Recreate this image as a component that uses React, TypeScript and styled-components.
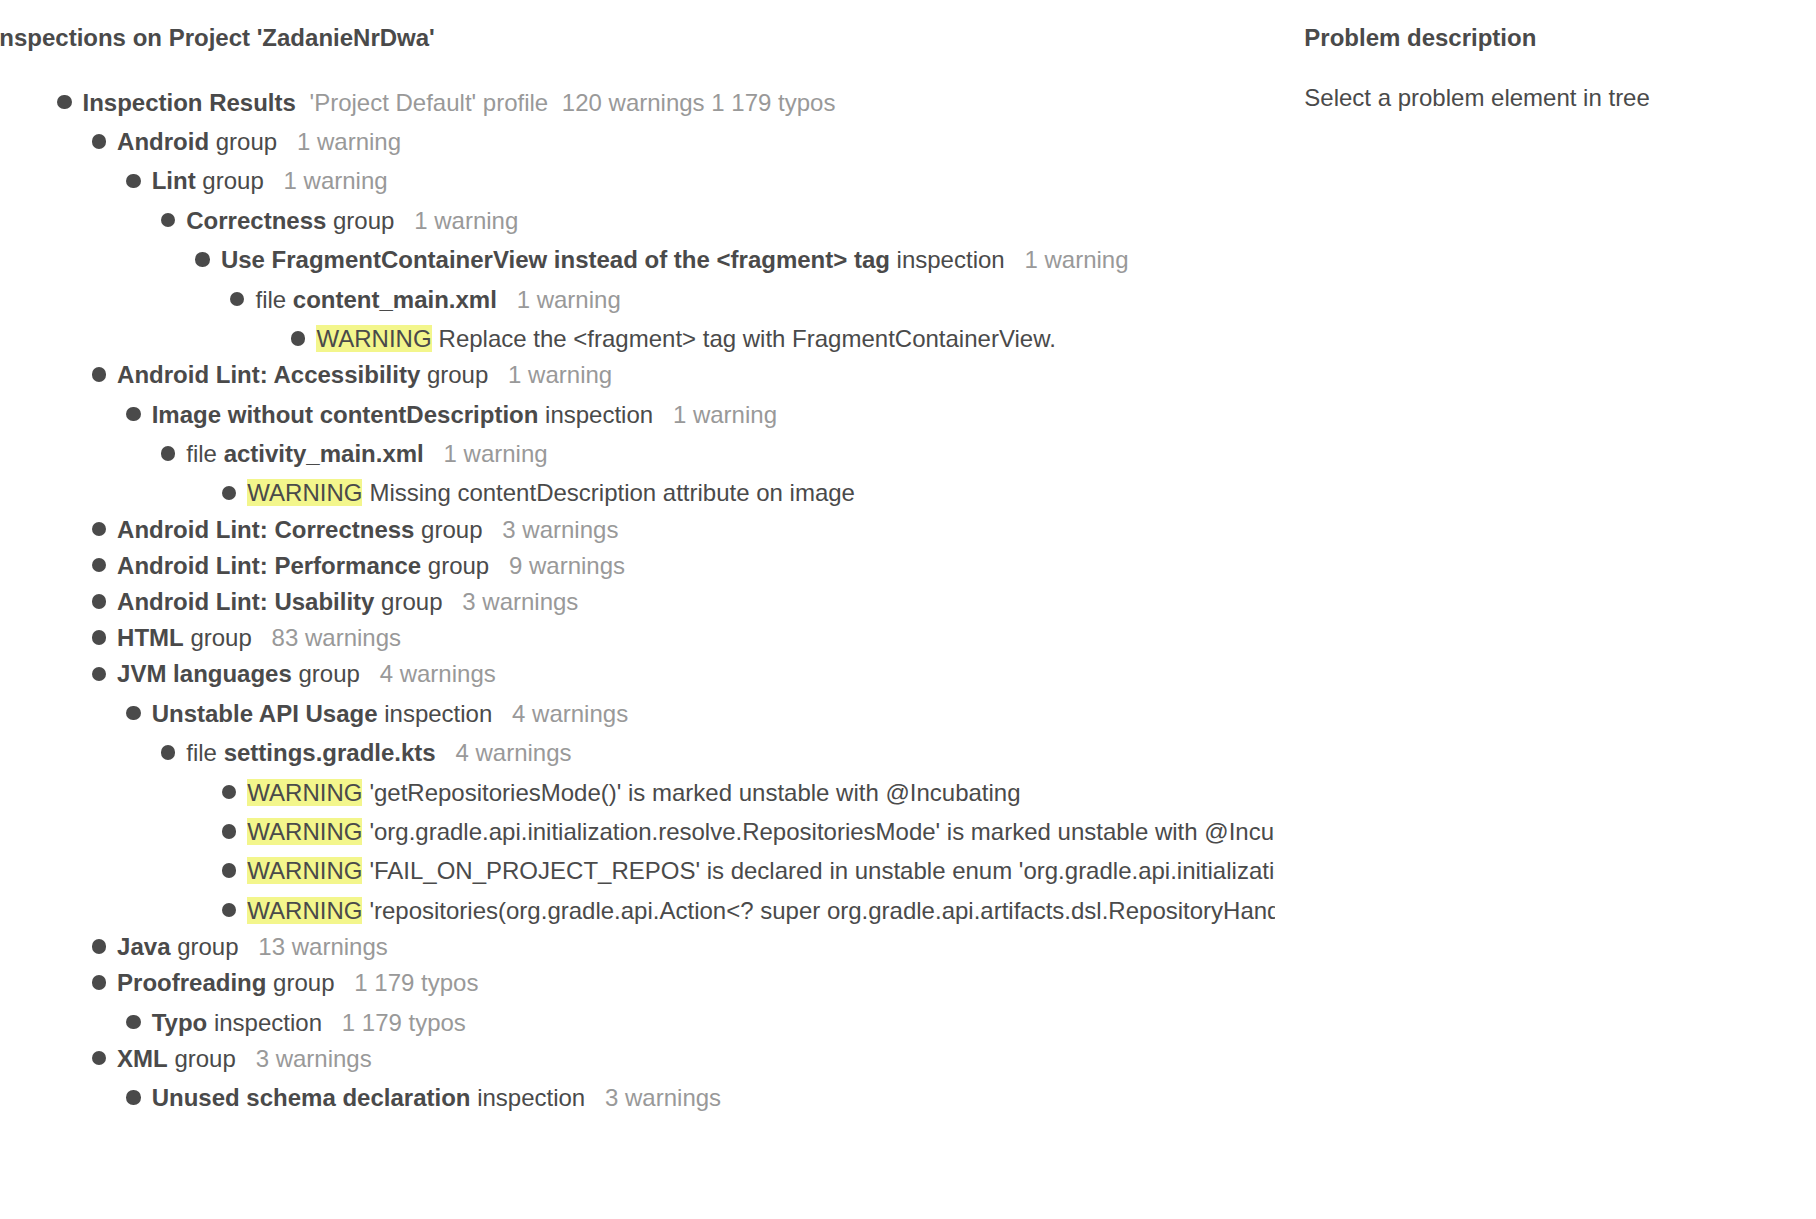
import React from "react";
import styled, { createGlobalStyle } from "styled-components";

const GlobalStyle = createGlobalStyle`
  html, body {
    margin: 0;
    padding: 0;
    background: #ffffff;
  }
  body {
    font-family: "Liberation Sans", Arial, sans-serif;
    font-size: 24px;
    color: #4a4a4a;
  }
`;

const Page = styled.div`
  display: flex;
  width: 1816px;
  height: 1219px;
  overflow: hidden;
  background: #ffffff;
`;

const LeftPanel = styled.div`
  width: 1275px;
  flex: none;
  overflow: hidden;
  padding-top: 20.3px;
  box-sizing: border-box;
`;

const RightPanel = styled.div`
  flex: 1;
  padding-top: 20.3px;
  padding-left: 29.3px;
  box-sizing: border-box;
`;

const PanelTitle = styled.div<{ $shift?: number }>`
  font-weight: bold;
  line-height: 36.2px;
  white-space: nowrap;
  margin-left: ${(p) => p.$shift ?? 0}px;
`;

const Hint = styled.div`
  line-height: 36.2px;
  margin-top: 23px;
  white-space: nowrap;
`;

const Tree = styled.div`
  margin-top: 28.2px;
  padding-left: 57px;
`;

const Children = styled.div<{ $leaf?: boolean }>`
  display: flex;
  flex-direction: column;
  padding-left: ${(p) => (p.$leaf ? 61 : 34.6)}px;
  margin-top: ${(p) => (p.$leaf ? 0 : 3.2)}px;
`;

const Row = styled.div<{ $leaf?: boolean }>`
  display: flex;
  align-items: flex-start;
  line-height: 36.2px;
  white-space: nowrap;
  margin-top: ${(p) => (p.$leaf ? 3.2 : 0)}px;
`;

const Bullet = styled.span`
  flex: none;
  width: 14.5px;
  height: 14.5px;
  border-radius: 50%;
  background: #4a4a4a;
  margin-top: 10.1px;
  margin-right: 11px;
`;

const Label = styled.span`
  white-space: nowrap;
`;

const Strong = styled.b`
  font-weight: bold;
`;

const Meta = styled.span<{ $gap?: number }>`
  color: #999999;
  margin-left: ${(p) => p.$gap ?? 19.8}px;
`;

const Severity = styled.span`
  background: #f3f68c;
  margin-right: 7px;
`;

type Node = {
  pre?: string;
  name?: string;
  kind?: string;
  count?: string;
  warning?: string;
  children?: Node[];
};

const tree: Node[] = [
  {
    name: "Android",
    kind: "group",
    count: "1 warning",
    children: [
      {
        name: "Lint",
        kind: "group",
        count: "1 warning",
        children: [
          {
            name: "Correctness",
            kind: "group",
            count: "1 warning",
            children: [
              {
                name: "Use FragmentContainerView instead of the <fragment> tag",
                kind: "inspection",
                count: "1 warning",
                children: [
                  {
                    pre: "file",
                    name: "content_main.xml",
                    count: "1 warning",
                    children: [
                      { warning: "Replace the <fragment> tag with FragmentContainerView." },
                    ],
                  },
                ],
              },
            ],
          },
        ],
      },
    ],
  },
  {
    name: "Android Lint: Accessibility",
    kind: "group",
    count: "1 warning",
    children: [
      {
        name: "Image without contentDescription",
        kind: "inspection",
        count: "1 warning",
        children: [
          {
            pre: "file",
            name: "activity_main.xml",
            count: "1 warning",
            children: [{ warning: "Missing contentDescription attribute on image" }],
          },
        ],
      },
    ],
  },
  { name: "Android Lint: Correctness", kind: "group", count: "3 warnings" },
  { name: "Android Lint: Performance", kind: "group", count: "9 warnings" },
  { name: "Android Lint: Usability", kind: "group", count: "3 warnings" },
  { name: "HTML", kind: "group", count: "83 warnings" },
  {
    name: "JVM languages",
    kind: "group",
    count: "4 warnings",
    children: [
      {
        name: "Unstable API Usage",
        kind: "inspection",
        count: "4 warnings",
        children: [
          {
            pre: "file",
            name: "settings.gradle.kts",
            count: "4 warnings",
            children: [
              { warning: "'getRepositoriesMode()' is marked unstable with @Incubating" },
              {
                warning:
                  "'org.gradle.api.initialization.resolve.RepositoriesMode' is marked unstable with @Incubating",
              },
              {
                warning:
                  "'FAIL_ON_PROJECT_REPOS' is declared in unstable enum 'org.gradle.api.initialization.resolve.RepositoriesMode' marked with @Incubating",
              },
              {
                warning:
                  "'repositories(org.gradle.api.Action<? super org.gradle.api.artifacts.dsl.RepositoryHandler>)' is marked unstable with @Incubating",
              },
            ],
          },
        ],
      },
    ],
  },
  { name: "Java", kind: "group", count: "13 warnings" },
  {
    name: "Proofreading",
    kind: "group",
    count: "1 179 typos",
    children: [{ name: "Typo", kind: "inspection", count: "1 179 typos" }],
  },
  {
    name: "XML",
    kind: "group",
    count: "3 warnings",
    children: [{ name: "Unused schema declaration", kind: "inspection", count: "3 warnings" }],
  },
];

function TreeNode({ node }: { node: Node }) {
  if (node.warning) {
    return (
      <Row $leaf>
        <Bullet />
        <Label>
          <Severity>WARNING</Severity>
          {node.warning}
        </Label>
      </Row>
    );
  }
  const leafKids = !!node.children && node.children.every((c) => !!c.warning);
  return (
    <>
      <Row>
        <Bullet />
        <Label>
          {node.pre ? `${node.pre} ` : ""}
          <Strong>{node.name}</Strong>
          {node.kind ? ` ${node.kind}` : ""}
          {node.count && <Meta>{node.count}</Meta>}
        </Label>
      </Row>
      {node.children && (
        <Children $leaf={leafKids}>
          {node.children.map((c, i) => (
            <TreeNode key={i} node={c} />
          ))}
        </Children>
      )}
    </>
  );
}

export default function App() {
  return (
    <>
      <GlobalStyle />
      <Page>
        <LeftPanel>
          <PanelTitle $shift={-7.4}>Inspections on Project 'ZadanieNrDwa'</PanelTitle>
          <Tree>
            <Row>
              <Bullet />
              <Label>
                <Strong>Inspection Results</Strong>
                <Meta $gap={13.7}>'Project Default' profile</Meta>
                <Meta $gap={13.7}>120 warnings 1 179 typos</Meta>
              </Label>
            </Row>
            <Children>
              {tree.map((n, i) => (
                <TreeNode key={i} node={n} />
              ))}
            </Children>
          </Tree>
        </LeftPanel>
        <RightPanel>
          <PanelTitle>Problem description</PanelTitle>
          <Hint>Select a problem element in tree</Hint>
        </RightPanel>
      </Page>
    </>
  );
}
